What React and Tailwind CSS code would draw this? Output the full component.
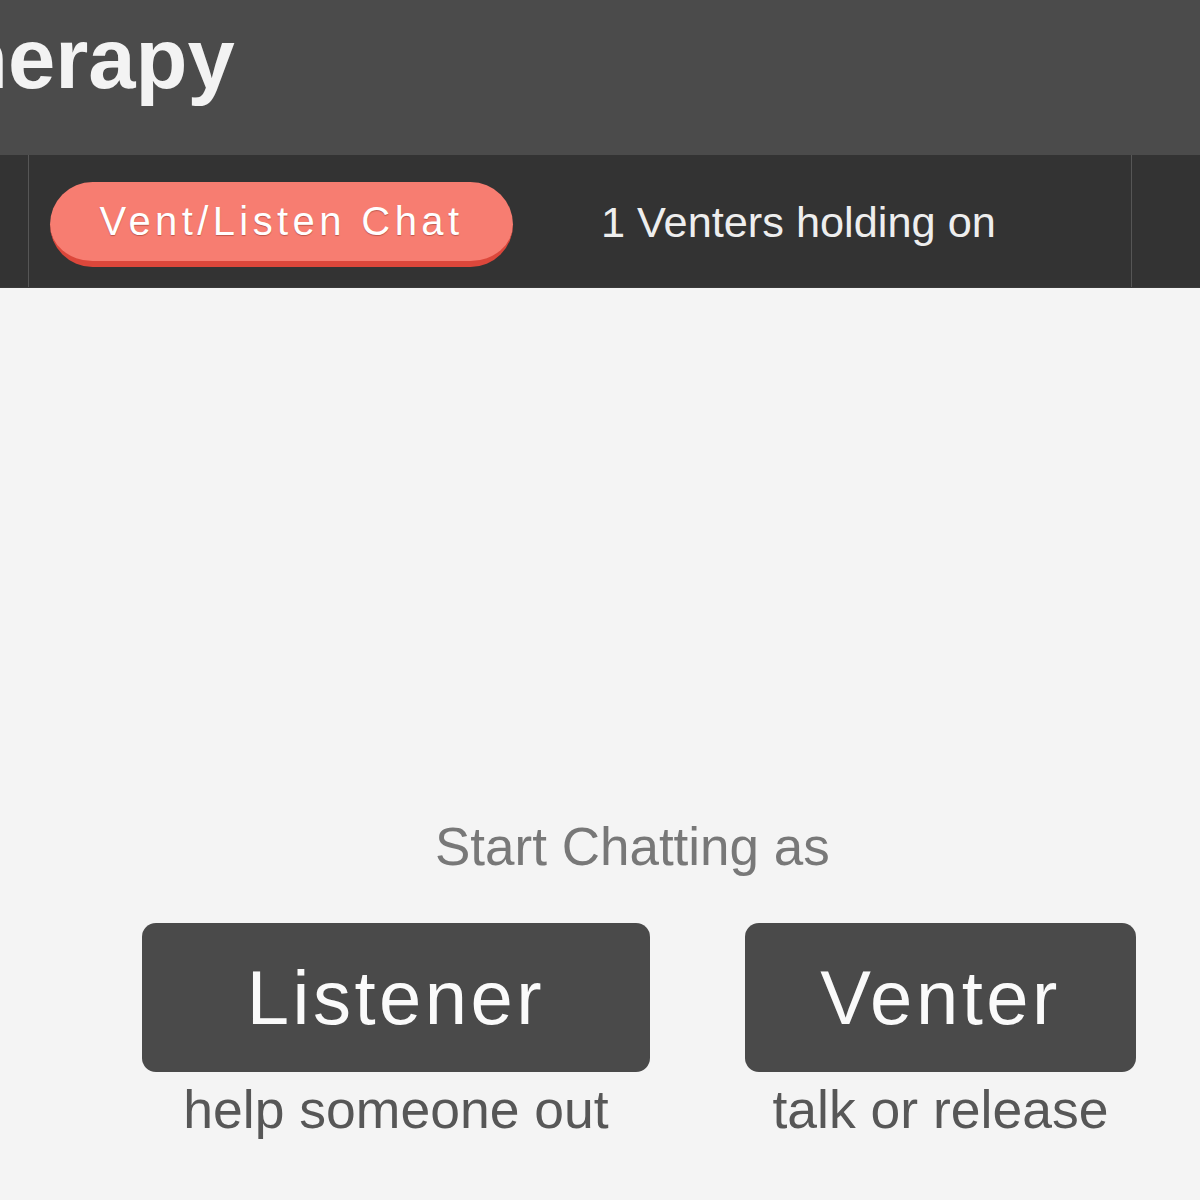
import React from 'react';

/**
 * Chat landing page: brand header, nav bar with the active chat pill,
 * and the role picker (Listener / Venter).
 */
function RoleButton({ label, hint, width }) {
  return (
    <div className="flex flex-col items-center">
      <button
        className={`${width} h-[149px] rounded-[14px] bg-[#4a4a4a] text-[#fafafa] text-[76px] leading-none tracking-[3.5px] flex items-center justify-center`}
      >
        {label}
      </button>
      <p className="mt-[11px] text-[53.5px] leading-none text-[#575757] whitespace-nowrap">{hint}</p>
    </div>
  );
}

export default function App() {
  return (
    <div className="min-h-[1200px] bg-[#f4f4f4] font-['Liberation_Sans',Arial,sans-serif] overflow-hidden">
      {/* Brand header */}
      <header className="h-[155px] bg-[#4b4b4b] overflow-hidden">
        <h1 className="ml-[-44px] pt-[16px] text-[85px] font-bold leading-none text-[#f3f3f3] whitespace-nowrap">
          herapy
        </h1>
      </header>

      {/* Nav bar */}
      <nav className="h-[133px] bg-[#333333] border-b border-[#3a3a3a]">
        <div className="ml-[28px] w-[1104px] h-full border-x border-[#565656] flex items-start pt-[27px]">
          <div className="ml-[21px] w-[463px] h-[85px] rounded-full bg-[#f77d71] border-b-[6px] border-[#dc473b] flex items-center justify-center pb-[1px]">
            <span className="text-[40px] leading-none tracking-[4.4px] text-white [text-shadow:0_1px_1px_rgba(120,40,30,0.45)]">
              Vent/Listen Chat
            </span>
          </div>
          <span className="ml-[88px] mt-[19px] text-[43.3px] leading-none text-[#eeeeee] whitespace-nowrap">
            1 Venters holding on
          </span>
        </div>
      </nav>

      {/* Role picker */}
      <main className="pt-[532px]">
        <p className="pl-[435px] text-[53px] leading-none text-[#787878]">Start Chatting as</p>
        <div className="mt-[50px] pl-[142px] flex gap-[95px]">
          <RoleButton label="Listener" hint="help someone out" width="w-[508px]" />
          <RoleButton label="Venter" hint="talk or release" width="w-[391px]" />
        </div>
      </main>
    </div>
  );
}
